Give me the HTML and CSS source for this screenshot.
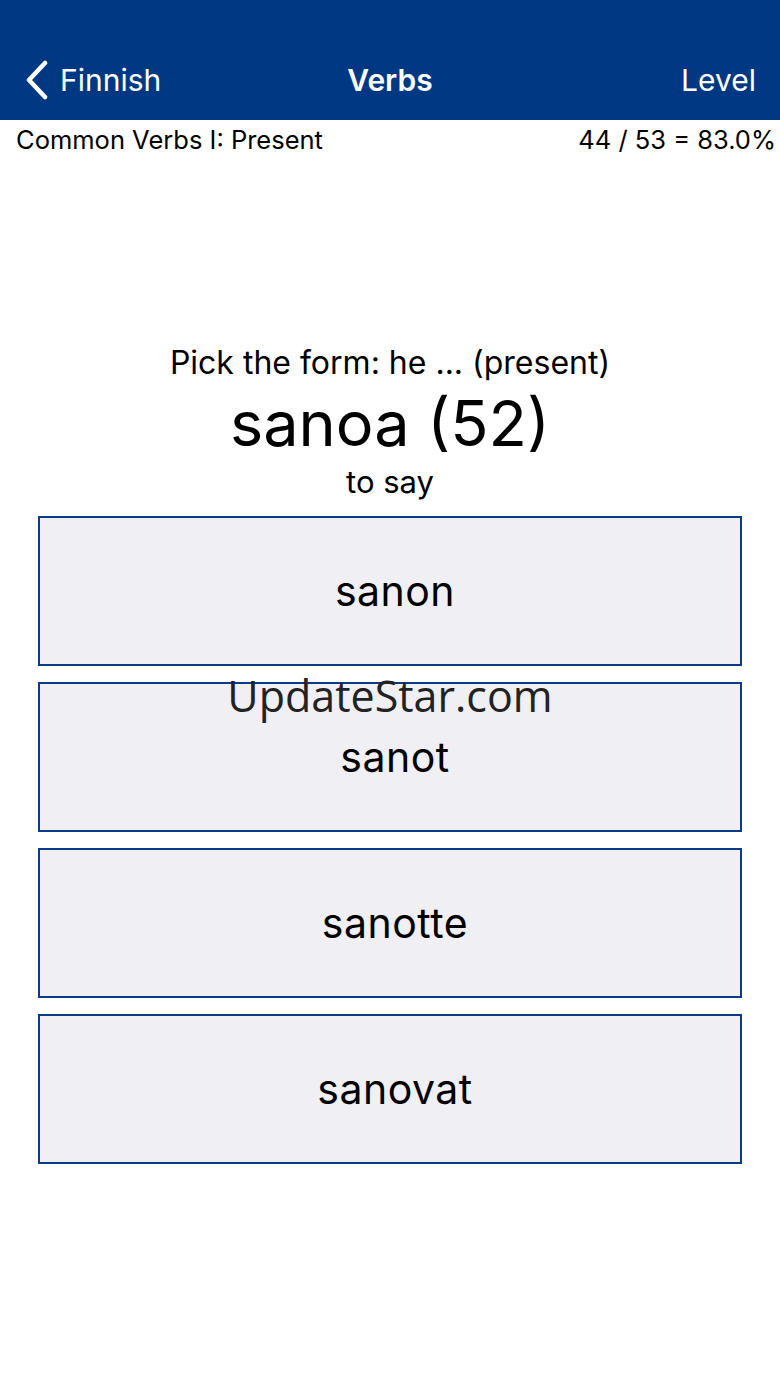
FILE: index.html
```html
<!DOCTYPE html>
<html lang="en">
<head>
    <meta charset="UTF-8">
    <meta name="viewport" content="width=device-width, initial-scale=1.0">
    <title>Verbs</title>
    <link rel="stylesheet" href="styles.css">
</head>
<body>

    <header class="navbar">
        <div class="nav-back">
            <svg class="chevron" width="26" height="40" viewBox="0 0 26 40">
                <path d="M21 3 L5 20 L21 37" fill="none" stroke="#fff" stroke-width="4.5" stroke-linecap="round" stroke-linejoin="round"/>
            </svg>
            <span>Finnish</span>
        </div>
        <div class="nav-title">Verbs</div>
        <div class="nav-right">Level</div>
    </header>

    <div class="status">
        <span>Common Verbs I: Present</span>
        <span>44 / 53 = 83.0%</span>
    </div>

    <div id="content">
        <div class="question">
            <div class="prompt">Pick the form: he ... (present)</div>
            <div class="word">sanoa (52)</div>
            <div class="meaning">to say</div>
        </div>

        <div class="answers">
            <button class="answer">sanon</button>
            <button class="answer">sanot</button>
            <button class="answer">sanotte</button>
            <button class="answer">sanovat</button>
            <div class="watermark">UpdateStar.com</div>
        </div>
    </div>

</body>
</html>
```

FILE: styles.css
```css
body {
    font-family: Inter, "Liberation Sans", sans-serif;
    background-color: #fff;
    color: #000;
    margin: 0;
    padding: 0;
}

.navbar {
    background-color: #003883;
    color: #fff;
    height: 120px;
    display: flex;
    align-items: flex-end;
    justify-content: space-between;
    padding: 0 24px 20px 24px;
    box-sizing: border-box;
    position: relative;
    font-size: 30px;
}

.nav-back {
    display: flex;
    align-items: center;
    gap: 10px;
}

.chevron {
    display: block;
}

.nav-title {
    position: absolute;
    left: 0;
    right: 0;
    bottom: 20px;
    text-align: center;
    font-weight: 600;
    line-height: 40px;
}

.nav-right {
    line-height: 40px;
}

.nav-back span {
    line-height: 40px;
}

.status {
    display: flex;
    justify-content: space-between;
    padding: 4px 4px 0 16px;
    font-size: 25.5px;
    line-height: 32px;
}

#content {
    display: flex;
    flex-direction: column;
    align-items: center;
    padding-top: 188px;
}

.question {
    text-align: center;
}

.prompt {
    font-size: 32px;
    line-height: 38px;
}

.word {
    font-size: 63px;
    line-height: 82px;
}

.meaning {
    font-size: 31px;
    line-height: 36px;
}

.answers {
    position: relative;
    display: flex;
    flex-direction: column;
    gap: 16px;
    width: 704px;
    margin-top: 16px;
}

.answer {
    height: 150px;
    background-color: #efeff4;
    border: 2px solid #0b3a86;
    font-family: Inter, "Liberation Sans", sans-serif;
    font-size: 41px;
    letter-spacing: 0.5px;
    color: #000;
    padding: 0 0 0 10px;
    cursor: pointer;
}

.watermark {
    position: absolute;
    left: 0;
    right: 0;
    top: 150px;
    text-align: center;
    font-family: "Open Sans", sans-serif;
    font-size: 43px;
    color: #222;
    pointer-events: none;
}
```
